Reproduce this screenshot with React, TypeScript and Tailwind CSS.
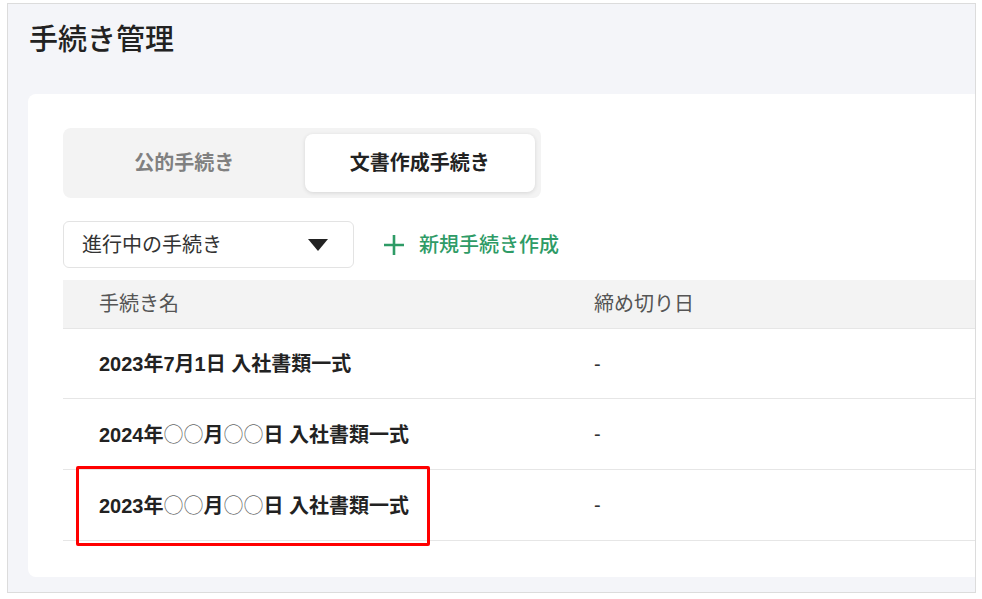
import React from "react";

const rows = [
  { name: ["2023年7月1日 入社書類一式"], due: "-" },
  { name: ["2024年", "○○", "月", "○○", "日 入社書類一式"], due: "-" },
  { name: ["2023年", "○○", "月", "○○", "日 入社書類一式"], due: "-", marked: true },
];

const PlusIcon: React.FC = () => (
  <svg width="22" height="22" viewBox="0 0 22 22" fill="none">
    <path d="M11 1v20M1 11h20" stroke="#2e9b66" strokeWidth="2.6" />
  </svg>
);

export default function App() {
  const [tab, setTab] = React.useState<"public" | "docs">("docs");

  return (
    <div className="min-h-[599px] bg-white font-['Liberation_Sans','Noto_Sans_CJK_JP',sans-serif] text-[#222]">
      <div className="ml-[7px] mt-[3px] w-[969px] overflow-hidden border border-[#dcdcdc] bg-[#f4f5f9] pb-[15px]">
        {/* Page title */}
        <h1 className="px-[21px] pt-[20px] text-[29px] font-medium leading-[32px] text-[#222]">
          手続き管理
        </h1>

        {/* Main card */}
        <div className="ml-[20px] mt-[38px] rounded-l-lg bg-white pb-[36px] pl-[35px] pt-[34px]">
          {/* Tabs */}
          <div className="grid w-[478px] grid-cols-2 gap-[5px] rounded-lg bg-[#f3f3f3] p-[6px]">
            <button
              onClick={() => setTab("public")}
              className={`h-[58px] rounded-lg text-[20px] font-bold ${
                tab === "public" ? "bg-white text-[#222] shadow-[0_1px_4px_rgba(0,0,0,0.12)]" : "text-[#808080]"
              }`}
            >
              公的手続き
            </button>
            <button
              onClick={() => setTab("docs")}
              className={`h-[58px] rounded-lg text-[20px] font-bold ${
                tab === "docs" ? "bg-white text-[#222] shadow-[0_1px_4px_rgba(0,0,0,0.12)]" : "text-[#808080]"
              }`}
            >
              文書作成手続き
            </button>
          </div>

          {/* Filter + create */}
          <div className="mt-[23px] flex items-center gap-[29px]">
            <div className="flex h-[47px] w-[291px] items-center justify-between rounded-md border border-[#e3e3e3] bg-white pl-[18px] pr-[25px]">
              <span className="text-[20px] text-[#333]">進行中の手続き</span>
              <svg width="20" height="12" viewBox="0 0 20 12">
                <path d="M0 0h20L10 12z" fill="#222" />
              </svg>
            </div>
            <button className="flex items-center gap-[14px] text-[20px] font-medium text-[#2e9b66]">
              <PlusIcon />
              新規手続き作成
            </button>
          </div>

          {/* Table */}
          <div className="mt-[12px]">
            <div className="grid h-[49px] grid-cols-[495px_1fr] items-center border-b border-[#e6e6e6] bg-[#f3f3f3] px-[36px] text-[20px] text-[#555]">
              <span>手続き名</span>
              <span>締め切り日</span>
            </div>
            {rows.map((r, i) => (
              <div
                key={i}
                className={`relative grid grid-cols-[495px_1fr] items-center border-b border-[#e6e6e6] px-[36px] ${
                  i === 0 ? "h-[70px]" : "h-[71px]"
                }`}
              >
                <span className="text-[20px] font-bold text-[#222]">
                  {r.name.map((part, j) =>
                    part === "○○" ? (
                      <span key={j} className="font-['Noto_Sans_CJK_JP',sans-serif] font-light text-[#666]">
                        {part}
                      </span>
                    ) : (
                      <React.Fragment key={j}>{part}</React.Fragment>
                    )
                  )}
                </span>
                <span className="text-[20px] text-[#333]">{r.due}</span>
                {r.marked && (
                  <div className="absolute left-[13px] top-[-4px] h-[80px] w-[354px] rounded-[2px] border-[3px] border-[#ff0000]" />
                )}
              </div>
            ))}
          </div>
        </div>
      </div>
    </div>
  );
}
